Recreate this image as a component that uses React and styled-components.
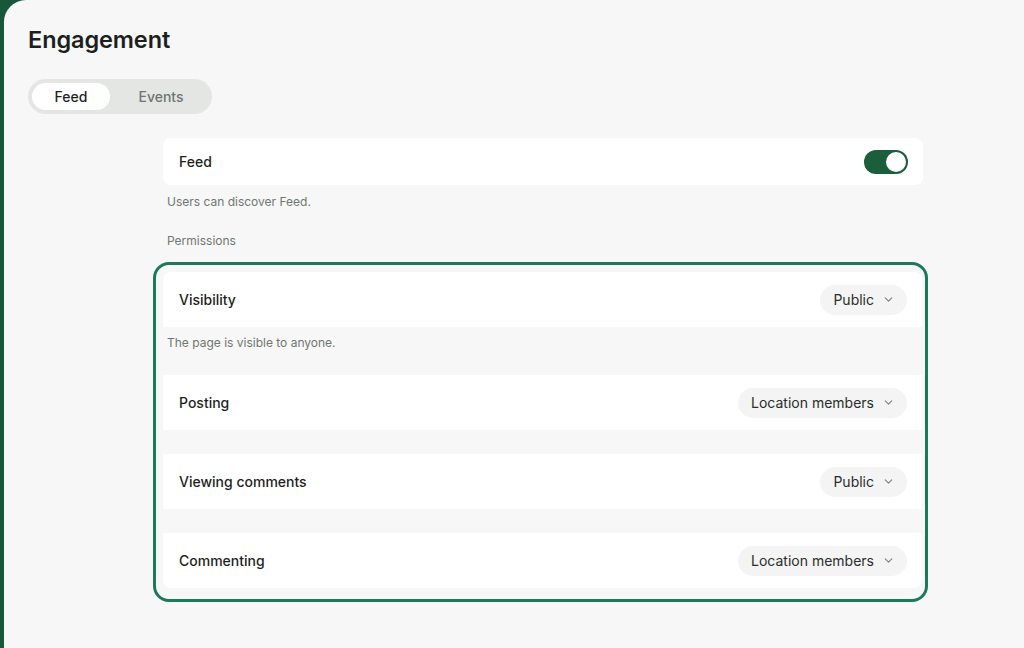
import React from "react";
import styled, { createGlobalStyle } from "styled-components";
import { ChevronDown } from "lucide-react";

const Global = createGlobalStyle`
  html, body { margin: 0; background: #17583a; }
  body { font-family: Inter, "Noto Sans", sans-serif; color: #1d1f1e; }
`;

const Frame = styled.div`
  margin-left: 4px;
  height: 648px;
  background: #f7f7f7;
  border-top-left-radius: 22px;
  padding: 24px 0 0 24px;
  box-sizing: border-box;
`;

const Title = styled.h1`
  margin: 0;
  font-size: 23.5px;
  font-weight: 600;
  letter-spacing: -0.1px;
  line-height: 32px;
`;

const Tabs = styled.div`
  margin-top: 23px;
  display: inline-flex;
  background: #e4e6e4;
  border-radius: 18px;
  padding: 4px;
  gap: 4px;
  width: 176px;
`;

const Tab = styled.div`
  flex: ${p => (p.$active ? "0 0 78px" : "1")};
  height: 27px;
  border-radius: 14px;
  display: flex;
  align-items: center;
  justify-content: center;
  font-size: 14px;
  font-weight: 500;
  background: ${p => (p.$active ? "#fff" : "transparent")};
  color: ${p => (p.$active ? "#1d1f1e" : "#6e766f")};
`;

const Column = styled.div`
  width: 760px;
  margin: 24px 0 0 135px;
`;

const Card = styled.div`
  background: #fff;
  border-radius: ${p => p.$radius || "8px"};
  height: ${p => p.$h || "55px"};
  display: flex;
  align-items: center;
  justify-content: space-between;
  padding: 0 15px 0 16px;
  font-size: 14px;
  font-weight: 500;
`;

const Hint = styled.div`
  font-size: 12px;
  color: #6f7672;
  padding: ${p => p.$pad};
  height: ${p => p.$h || "auto"};
  box-sizing: border-box;
`;

const Toggle = styled.div`
  width: 44px;
  height: 24px;
  border-radius: 12px;
  background: #1a5e3b;
  position: relative;
  &::after {
    content: "";
    position: absolute;
    right: 2px;
    top: 2px;
    width: 20px;
    height: 20px;
    border-radius: 50%;
    background: #fff;
  }
`;

const Highlight = styled.div`
  margin: 14px 0 0 -10px;
  border: 3px solid #1b7a5a;
  border-radius: 16px;
  padding: 7px 3px 11px 7px;
  width: 775px;
  box-sizing: border-box;
`;

const Gap = styled.div`
  height: ${p => p.$h};
`;

const Select = styled.div`
  display: flex;
  align-items: center;
  gap: 8px;
  height: 30px;
  padding: 0 12px 0 13px;
  border-radius: 15px;
  background: #f3f4f3;
  font-size: 14px;
  font-weight: 400;
  color: #2a2d2b;
`;

const Drop = ({ label }) => (
  <Select>
    {label}
    <ChevronDown size={13} color="#7b827d" />
  </Select>
);

export default function App() {
  return (
    <>
      <Global />
      <Frame>
        <Title>Engagement</Title>
        <Tabs>
          <Tab $active>Feed</Tab>
          <Tab>Events</Tab>
        </Tabs>
        <Column>
          <Card $h="47px">
            Feed
            <Toggle />
          </Card>
          <Hint $pad="9px 4px 0">Users can discover Feed.</Hint>
          <Hint $pad="24px 4px 0">Permissions</Hint>
          <Highlight>
            <Card $radius="8px 8px 0 0">
              Visibility
              <Drop label="Public" />
            </Card>
            <Hint $pad="8px 4px 0" $h="48px">
              The page is visible to anyone.
            </Hint>
            <Card $radius="0">
              Posting
              <Drop label="Location members" />
            </Card>
            <Gap $h="24px" />
            <Card $radius="0">
              Viewing comments
              <Drop label="Public" />
            </Card>
            <Gap $h="24px" />
            <Card $radius="0 0 8px 8px">
              Commenting
              <Drop label="Location members" />
            </Card>
          </Highlight>
        </Column>
      </Frame>
    </>
  );
}
